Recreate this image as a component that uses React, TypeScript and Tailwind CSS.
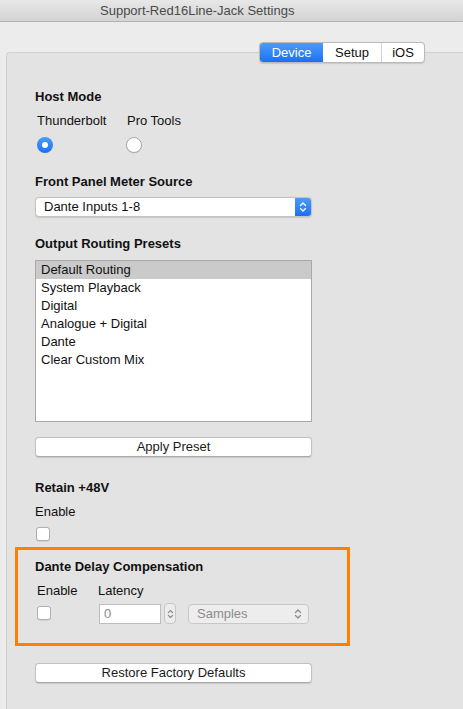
import React from "react";

const Chevrons = ({ color = "#fff", w = 8, h = 12 }: { color?: string; w?: number; h?: number }) => (
  <svg width={w} height={h} viewBox="0 0 8 12" fill="none">
    <path d="M1.5 4.5 L4 2 L6.5 4.5" stroke={color} strokeWidth="1.3" strokeLinecap="round" strokeLinejoin="round" />
    <path d="M1.5 7.5 L4 10 L6.5 7.5" stroke={color} strokeWidth="1.3" strokeLinecap="round" strokeLinejoin="round" />
  </svg>
);

const Checkbox = () => (
  <div className="w-[14px] h-[14px] rounded-[3px] bg-white border border-[#b0b0b0] shadow-[0_0.5px_0.5px_rgba(0,0,0,0.15)]" />
);

const MacButton = ({ label, mt }: { label: string; mt: string }) => (
  <div
    className={`${mt} w-[277px] h-[20px] rounded-[4px] bg-white border border-[#c3c3c3] border-b-[#aaaaaa] flex items-center justify-center text-[13px] text-[#1a1a1a] shadow-[0_0.5px_1px_rgba(0,0,0,0.12)]`}
  >
    {label}
  </div>
);

export default function App() {
  const presets = ["Default Routing", "System Playback", "Digital", "Analogue + Digital", "Dante", "Clear Custom Mix"];
  return (
    <div
      className="w-[463px] h-[709px] overflow-hidden bg-[#ececec] flex flex-col text-[#111]"
      style={{ fontFamily: '"Liberation Sans", Arial, sans-serif' }}
    >
      {/* Title bar */}
      <div className="h-[22px] shrink-0 bg-gradient-to-b from-[#e8e8e8] to-[#d3d3d3] border-b border-[#b4b4b4] flex items-center pt-[1px] pl-[100px] text-[13px] text-[#4a4a4a]">
        Support-Red16Line-Jack Settings
      </div>

      {/* Tabs */}
      <div className="pt-[20px] pl-[259px] relative z-10 flex">
        <div className="flex h-[21px] rounded-[4px] border border-[#b9b9b9] bg-white text-[13px] shadow-[0_0.5px_1px_rgba(0,0,0,0.12)] overflow-hidden">
          <div className="w-[63px] flex items-center justify-center text-white bg-gradient-to-b from-[#4c9bfa] to-[#1b70f3]">Device</div>
          <div className="w-[59px] flex items-center justify-center border-r border-[#d3d3d3]">Setup</div>
          <div className="w-[42px] flex items-center justify-center">iOS</div>
        </div>
      </div>

      {/* Panel */}
      <div className="-mt-[11px] ml-[6px] w-[470px] flex-1 bg-[#e3e3e3] border-t border-l border-[#d0d0d0] rounded-tl-[4px] pl-[28px] pt-[36px] flex flex-col items-start">
        <div className="text-[13px] font-bold leading-[16px]">Host Mode</div>
        <div className="mt-[8px] flex text-[13px] leading-[16px]">
          <div className="w-[92px] flex flex-col items-start pl-[2px]">
            <span>Thunderbolt</span>
            <div className="mt-[8px] w-[16px] h-[16px] rounded-full bg-gradient-to-b from-[#4c9bfa] to-[#1b70f3] flex items-center justify-center">
              <div className="w-[6px] h-[6px] rounded-full bg-white" />
            </div>
          </div>
          <div className="flex flex-col items-start">
            <span>Pro Tools</span>
            <div className="mt-[8px] ml-[-1px] w-[16px] h-[16px] rounded-full bg-white border border-[#a9a9a9] shadow-[0_0.5px_0.5px_rgba(0,0,0,0.1)]" />
          </div>
        </div>

        <div className="mt-[21px] text-[13px] font-bold leading-[16px]">Front Panel Meter Source</div>
        <div className="mt-[7px] w-[277px] h-[20px] rounded-[4px] bg-white border border-[#c4c4c4] flex items-stretch text-[13px] shadow-[0_0.5px_1px_rgba(0,0,0,0.12)] overflow-hidden">
          <div className="flex-1 flex items-center pl-[8px]">Dante Inputs 1-8</div>
          <div className="w-[16px] bg-gradient-to-b from-[#4c9bfa] to-[#1b70f3] flex items-center justify-center">
            <Chevrons />
          </div>
        </div>

        <div className="mt-[19px] text-[13px] font-bold leading-[16px]">Output Routing Presets</div>
        <div className="mt-[8px] w-[277px] h-[162px] bg-white border border-[#a9a9a9] text-[13px]">
          {presets.map((p, i) => (
            <div key={p} className={`h-[18px] leading-[18px] pl-[5px] ${i === 0 ? "bg-[#cacaca]" : ""}`}>
              {p}
            </div>
          ))}
        </div>

        <MacButton label="Apply Preset" mt="mt-[15px]" />

        <div className="mt-[23px] text-[13px] font-bold leading-[16px]">Retain +48V</div>
        <div className="mt-[8px] text-[13px] leading-[16px]">Enable</div>
        <div className="mt-[7px] ml-[1px]">
          <Checkbox />
        </div>

        {/* Orange box */}
        <div className="mt-[6px] -ml-[20px] w-[335px] h-[99px] border-[3px] border-[#ff8000] pl-[17px] pt-[9px] flex flex-col items-start">
          <div className="text-[13px] font-bold leading-[16px]">Dante Delay Compensation</div>
          <div className="mt-[8px] flex text-[13px] leading-[16px]">
            <div className="w-[63px] pl-[2px] flex flex-col items-start">
              <span>Enable</span>
              <div className="mt-[7px]">
                <Checkbox />
              </div>
            </div>
            <div className="flex flex-col items-start">
              <span>Latency</span>
              <div className="mt-[4px] flex items-center">
                <div className="ml-[1px] w-[62px] h-[20px] bg-white border border-[#bdbdbd] flex items-center pl-[4px] text-[#8a8a8a]">0</div>
                <div className="ml-[3px] w-[12px] h-[21px] rounded-[4px] bg-[#ececec] border border-[#c6c6c6] flex items-center justify-center">
                  <Chevrons color="#8a8a8a" w={7} h={12} />
                </div>
                <div className="ml-[12px] w-[121px] h-[20px] rounded-[4px] bg-[#ededed] border border-[#c8c8c8] flex items-center justify-between pl-[8px] pr-[6px] text-[#8c8c8c]">
                  <span>Samples</span>
                  <Chevrons color="#8a8a8a" w={8} h={12} />
                </div>
              </div>
            </div>
          </div>
        </div>

        <MacButton label="Restore Factory Defaults" mt="mt-[17px]" />
      </div>
    </div>
  );
}
